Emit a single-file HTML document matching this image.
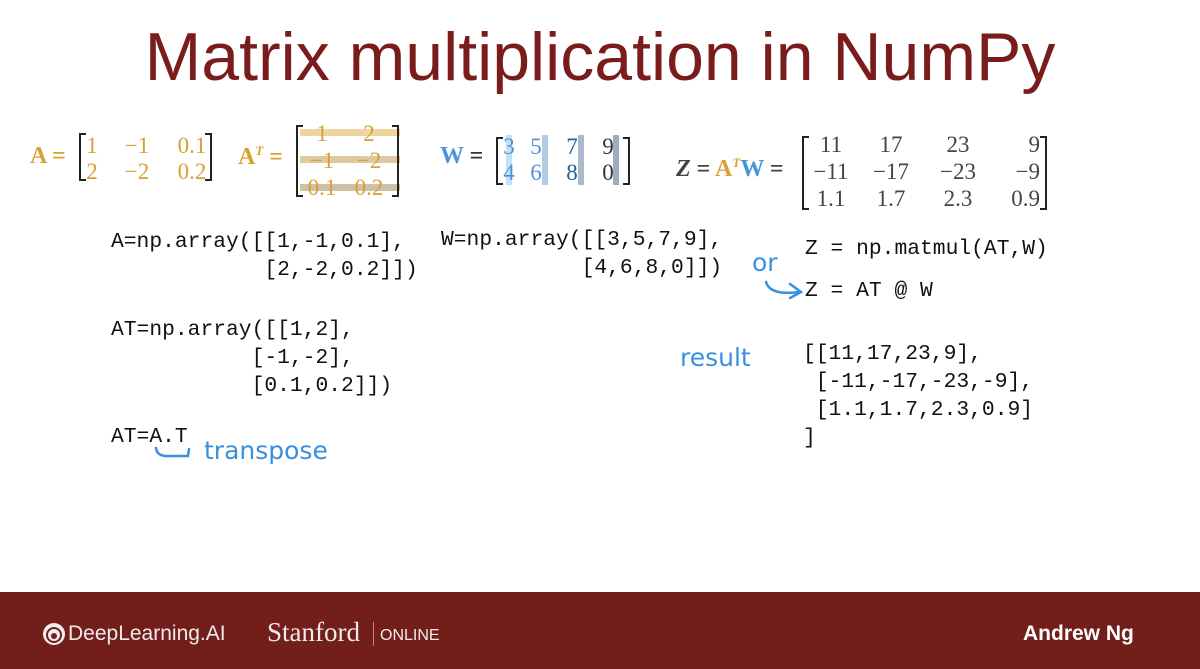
<!DOCTYPE html>
<html><head><meta charset="utf-8"><style>
body{margin:0;width:1200px;height:669px;background:#fff;position:relative;overflow:hidden;font-family:"Liberation Sans",sans-serif}
.a{position:absolute;white-space:pre}
.m{font-family:"Liberation Mono",monospace;font-size:21.3px;color:#111;line-height:28px}
.s{font-family:"Liberation Serif",serif;font-size:23px}
.h{font-family:"DejaVu Sans",sans-serif;color:#3a8fe0;font-size:25px;font-weight:normal}
.or{color:#d9a034}
.bl{color:#4a94dc}
.br{position:absolute;border:2px solid #222;width:5px}
.br.l{border-right:none}.br.r{border-left:none}
table.t{position:absolute;border-collapse:collapse;font-family:"Liberation Serif",serif;font-size:23px}
table.t td{padding:0;text-align:center}
</style></head><body>
<div class="a" style="left:0;width:1200px;text-align:center;top:18px;font-size:68px;color:#7a1c1c">Matrix multiplication in NumPy</div>

<div class="a s or" style="left:30px;top:143px;font-weight:bold;font-size:24px">A =</div>
<div class="br l" style="left:79px;top:133px;height:44px"></div>
<table class="t or" style="left:82px;top:133px;line-height:26px"><tr><td style="width:20px">1</td><td style="width:70px">−1</td><td style="width:40px">0.1</td></tr><tr><td>2</td><td>−2</td><td>0.2</td></tr></table>
<div class="br r" style="left:205px;top:133px;height:44px"></div>

<div class="a s or" style="left:238px;top:143px;font-weight:bold;font-size:24px">A<sup style="font-size:13px;font-style:italic">T</sup> =</div>
<div style="position:absolute;left:300px;top:129px;width:100px;height:7px;background:#f0d4a0"></div>
<div style="position:absolute;left:300px;top:156px;width:100px;height:7px;background:#e0c8a0"></div>
<div style="position:absolute;left:300px;top:184px;width:100px;height:7px;background:#cfc0a8"></div>
<div class="br l" style="left:296px;top:125px;height:68px"></div>
<table class="t or" style="left:300px;top:120px;line-height:27px"><tr><td style="width:44px">1</td><td style="width:50px">2</td></tr><tr><td>−1</td><td>−2</td></tr><tr><td>0.1</td><td>0.2</td></tr></table>
<div class="br r" style="left:392px;top:125px;height:68px"></div>

<div class="a s bl" style="left:440px;top:143px;font-weight:bold;font-size:24px">W <span style="color:#333">=</span></div>
<div style="position:absolute;left:506px;top:135px;width:6px;height:50px;background:#c5e0f5"></div>
<div style="position:absolute;left:542px;top:135px;width:6px;height:50px;background:#b5cce0"></div>
<div style="position:absolute;left:578px;top:135px;width:6px;height:50px;background:#a8bacc"></div>
<div style="position:absolute;left:613px;top:135px;width:6px;height:50px;background:#a0adb8"></div>
<div class="br l" style="left:496px;top:137px;height:44px"></div>
<table class="t" style="left:500px;top:134px;line-height:26px;color:#4a94dc"><tr><td style="width:18px">3</td><td style="width:36px">5</td><td style="width:36px;color:#2a5f8a">7</td><td style="width:36px;color:#23384a">9</td></tr><tr><td>4</td><td>6</td><td style="color:#2a5f8a">8</td><td style="color:#23384a">0</td></tr></table>
<div class="br r" style="left:623px;top:137px;height:44px"></div>

<div class="a s" style="left:676px;top:155px;font-weight:bold;font-size:24px;color:#444"><i>Z</i> = <span class="or">A<sup style="font-size:13px;font-style:italic">T</sup></span><span class="bl">W</span> =</div>
<div class="br l" style="left:802px;top:136px;height:70px"></div>
<table class="t" style="left:806px;top:131px;line-height:27px;color:#444"><tr><td style="width:50px">11</td><td style="width:70px">17</td><td style="width:64px">23</td><td style="width:50px;text-align:right">9</td></tr><tr><td>−11</td><td>−17</td><td>−23</td><td style="text-align:right">−9</td></tr><tr><td>1.1</td><td>1.7</td><td>2.3</td><td style="text-align:right">0.9</td></tr></table>
<div class="br r" style="left:1040px;top:136px;height:70px"></div>

<div class="a m" style="left:111px;top:228px">A=np.array([[1,-1,0.1],
            [2,-2,0.2]])</div>
<div class="a m" style="left:111px;top:316px">AT=np.array([[1,2],
           [-1,-2],
           [0.1,0.2]])</div>
<div class="a m" style="left:111px;top:423px">AT=A.T</div>
<div class="a m" style="left:441px;top:226px">W=np.array([[3,5,7,9],
           [4,6,8,0]])</div>
<div class="a m" style="left:805px;top:235px">Z = np.matmul(AT,W)</div>
<div class="a m" style="left:805px;top:277px">Z = AT @ W</div>
<div class="a m" style="left:803px;top:340px">[[11,17,23,9],
 [-11,-17,-23,-9],
 [1.1,1.7,2.3,0.9]
]</div>
<div class="a h" style="left:204px;top:436px">transpose</div>
<div class="a h" style="left:752px;top:248px">or</div>
<div class="a h" style="left:680px;top:343px">result</div>
<svg class="a" style="left:0;top:0" width="1200" height="669"><g fill="none" stroke="#3a8fe0" stroke-width="2.5" stroke-linecap="round">
<path d="M156 448 Q157 457 170 456 L188 456 L189 449"/>
<path d="M766 282 Q770 296 800 292 M790 284 L801 292 L790 298"/></g></svg>

<div style="position:absolute;left:0;top:592px;width:1200px;height:77px;background:#721f1c"></div>
<svg class="a" style="left:42px;top:622px" width="24" height="24"><circle cx="12" cy="12" r="11" fill="#eee"/><circle cx="12" cy="13" r="7" fill="none" stroke="#721f1c" stroke-width="2"/><circle cx="12" cy="14" r="3" fill="#721f1c"/></svg>
<div class="a" style="left:68px;top:622px;color:#f0eaea;font-size:21px">DeepLearning.AI</div>
<div class="a" style="left:267px;top:617px;color:#f0eaea;font-size:27px;font-family:'Liberation Serif',serif">Stanford</div>
<div style="position:absolute;left:373px;top:622px;width:1px;height:24px;background:#b88"></div>
<div class="a" style="left:380px;top:627px;color:#f0eaea;font-size:16px">ONLINE</div>
<div class="a" style="left:1023px;top:622px;color:#fff;font-size:21px;font-weight:bold">Andrew Ng</div>
</body></html>
